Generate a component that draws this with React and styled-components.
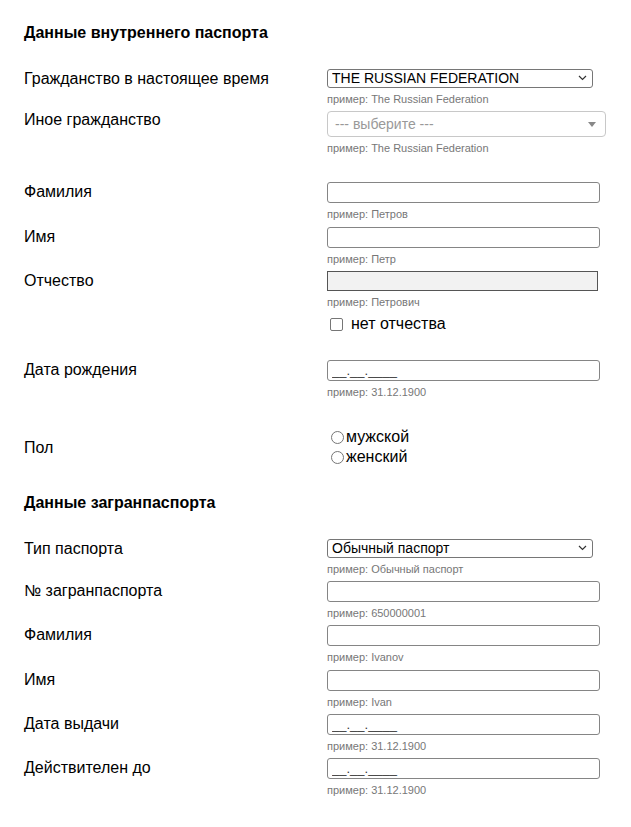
import React from "react";
import styled, { createGlobalStyle } from "styled-components";

const Global = createGlobalStyle`
  html, body { margin: 0; padding: 0; background: #fff; }
  body { font-family: "Liberation Sans", Arial, sans-serif; color: #000; }
`;

const Page = styled.form`
  padding: 24px 24px 24px 24px;
  width: 631px;
  box-sizing: border-box;
`;

const Heading = styled.h3`
  margin: 0 0 ${(p) => p.$after || 27}px 0;
  font-size: 16px;
  line-height: 18px;
  font-weight: bold;
`;

const Row = styled.div`
  display: grid;
  grid-template-columns: 303px 1fr;
  align-items: ${(p) => (p.$center ? "center" : "start")};
  margin-bottom: ${(p) => p.$after ?? 5}px;
`;

const Label = styled.label`
  font-size: 16px;
  line-height: 18px;
  padding-top: ${(p) => p.$pt ?? 1}px;
`;

const Field = styled.div`
  display: flex;
  flex-direction: column;
  align-items: flex-start;
`;

const Hint = styled.div`
  margin-top: 5px;
  font-size: 11px;
  line-height: 13px;
  color: #777;
`;

const SelectWrap = styled.div`
  position: relative;
  width: ${(p) => p.$w}px;
`;

const NativeSelect = styled.select`
  appearance: none;
  -webkit-appearance: none;
  width: 100%;
  height: 19px;
  box-sizing: border-box;
  border: 1px solid #767676;
  border-radius: 3px;
  background: #fff;
  padding: 0 20px 0 4px;
  font-family: "Liberation Sans", Arial, sans-serif;
  font-size: 14px;
  color: #000;
  line-height: 17px;
`;

const Chevron = styled.svg`
  position: absolute;
  right: 6px;
  top: 6px;
  pointer-events: none;
`;

const FancySelect = styled.div`
  display: flex;
  align-items: center;
  justify-content: space-between;
  width: 279px;
  height: 26px;
  box-sizing: border-box;
  border: 1px solid #c8c8c8;
  border-radius: 4px;
  padding: 0 9px 0 7px;
  font-size: 14px;
  color: #999;
`;

const TextInput = styled.input`
  width: ${(p) => (p.disabled ? 271 : 273)}px;
  height: ${(p) => (p.disabled ? 20 : 21)}px;
  box-sizing: border-box;
  border: 1px solid ${(p) => (p.disabled ? "#555" : "#858585")};
  border-radius: ${(p) => (p.disabled ? 0 : 3)}px;
  background: ${(p) => (p.disabled ? "#f2f2f2" : "#fff")};
  padding: 0 4px;
  font-family: "Liberation Sans", Arial, sans-serif;
  font-size: 13px;
  color: #333;
  outline: none;
`;

const CheckLine = styled.label`
  display: flex;
  align-items: center;
  gap: 8px;
  margin-top: 6px;
  margin-left: 3px;
  font-size: 16px;
  line-height: 18px;
`;

const Box = styled.span`
  width: 11px;
  height: 11px;
  border: 1px solid #767676;
  border-radius: 2px;
  background: #fff;
`;

const RadioGroup = styled.div`
  display: flex;
  flex-direction: column;
  margin-left: 4px;
`;

const RadioLine = styled.label`
  display: flex;
  align-items: center;
  gap: 2px;
  font-size: 16px;
  line-height: 20px;
`;

const Circle = styled.span`
  width: 11px;
  height: 11px;
  border: 1px solid #767676;
  border-radius: 50%;
  background: #fff;
`;

function Select({ value, width }) {
  return (
    <SelectWrap $w={width}>
      <NativeSelect defaultValue={value}>
        <option>{value}</option>
      </NativeSelect>
      <Chevron width="9" height="6" viewBox="0 0 9 6">
        <path d="M1 1l3.5 3.5L8 1" fill="none" stroke="#333" strokeWidth="1.2" />
      </Chevron>
    </SelectWrap>
  );
}

function InputRow({ label, hint, value, disabled, after, children }) {
  return (
    <Row $after={after}>
      <Label>{label}</Label>
      <Field>
        <TextInput disabled={disabled} defaultValue={value} />
        <Hint>{hint}</Hint>
        {children}
      </Field>
    </Row>
  );
}

export default function App() {
  return (
    <>
      <Global />
      <Page>
        <Heading>Данные внутреннего паспорта</Heading>
        <Row>
          <Label>Гражданство в настоящее время</Label>
          <Field>
            <Select value="THE RUSSIAN FEDERATION" width={266} />
            <Hint>пример: The Russian Federation</Hint>
          </Field>
        </Row>
        <Row $after={27}>
          <Label $pt={0}>Иное гражданство</Label>
          <Field>
            <FancySelect>
              <span>--- выберите ---</span>
              <svg width="8" height="5" viewBox="0 0 8 5">
                <path d="M0 0h8L4 5z" fill="#888" />
              </svg>
            </FancySelect>
            <Hint>пример: The Russian Federation</Hint>
          </Field>
        </Row>
        <InputRow label="Фамилия" hint="пример: Петров" after={6} />
        <InputRow label="Имя" hint="пример: Петр" />
        <InputRow label="Отчество" hint="пример: Петрович" disabled after={27}>
          <CheckLine>
            <Box />
            нет отчества
          </CheckLine>
        </InputRow>
        <InputRow label="Дата рождения" hint="пример: 31.12.1900" value="__.__.____" after={28} />
        <Row $center $after={27}>
          <Label>Пол</Label>
          <RadioGroup>
            <RadioLine>
              <Circle />
              мужской
            </RadioLine>
            <RadioLine>
              <Circle />
              женский
            </RadioLine>
          </RadioGroup>
        </Row>
        <Heading $after={27}>Данные загранпаспорта</Heading>
        <Row>
          <Label>Тип паспорта</Label>
          <Field>
            <Select value="Обычный паспорт" width={266} />
            <Hint>пример: Обычный паспорт</Hint>
          </Field>
        </Row>
        <InputRow label="№ загранпаспорта" hint="пример: 650000001" />
        <InputRow label="Фамилия" hint="пример: Ivanov" after={6} />
        <InputRow label="Имя" hint="пример: Ivan" />
        <InputRow label="Дата выдачи" hint="пример: 31.12.1900" value="__.__.____" />
        <InputRow label="Действителен до" hint="пример: 31.12.1900" value="__.__.____" />
      </Page>
    </>
  );
}
